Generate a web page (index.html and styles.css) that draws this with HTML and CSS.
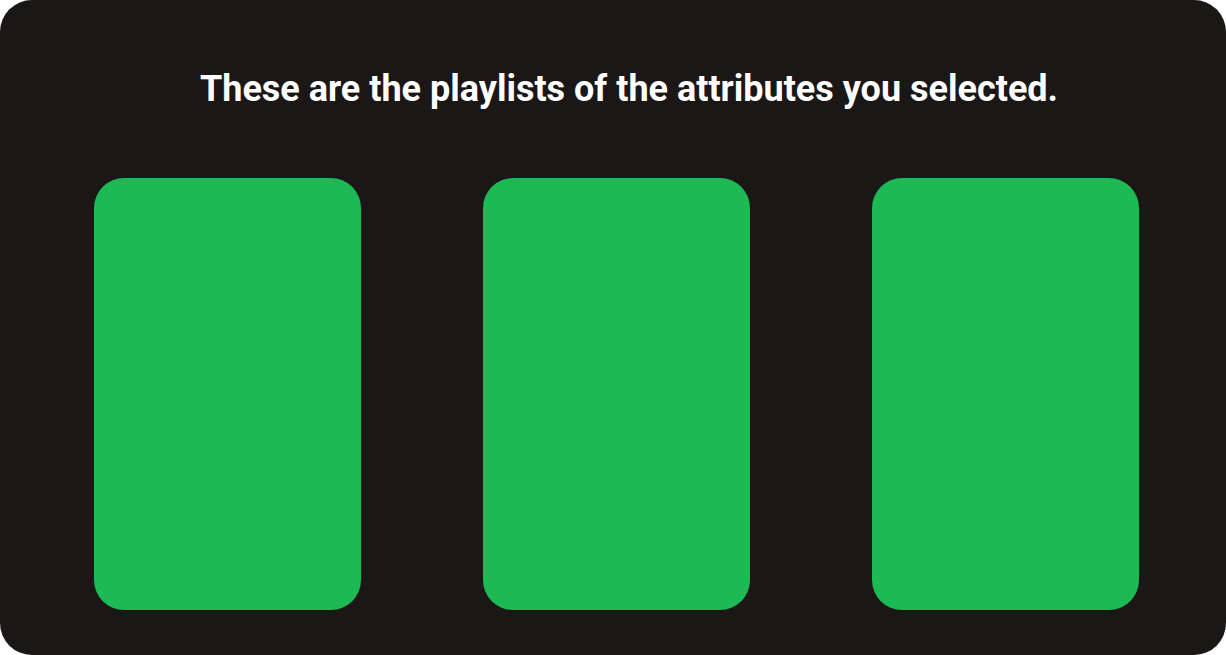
FILE: index.html
```html
<!DOCTYPE html>
<html>
<head>
<meta charset="utf-8">
<link rel="stylesheet" href="styles.css">
</head>
<body>
<main class="panel">
  <h1 class="title">These are the playlists of the attributes you selected.</h1>
  <div class="cards">
    <div class="card"></div>
    <div class="card"></div>
    <div class="card"></div>
  </div>
</main>
</body>
</html>
```
FILE: styles.css
```css
html, body {
  margin: 0;
  padding: 0;
  background: #ffffff;
}
.panel {
  width: 1226px;
  height: 655px;
  box-sizing: border-box;
  background: #1a1716;
  border-radius: 32px;
  padding: 64px 87px 0 94px;
  display: flex;
  flex-direction: column;
}
.title {
  margin: 0;
  font-family: Roboto, "Liberation Sans", sans-serif;
  font-weight: 700;
  font-size: 36px;
  line-height: 50px;
  color: #ffffff;
  text-align: center;
  padding-left: 25px;
  white-space: nowrap;
}
.cards {
  margin-top: 64px;
  display: flex;
  gap: 122px;
}
.card {
  width: 267px;
  height: 432px;
  background: #1db954;
  border-radius: 30px;
}
```
